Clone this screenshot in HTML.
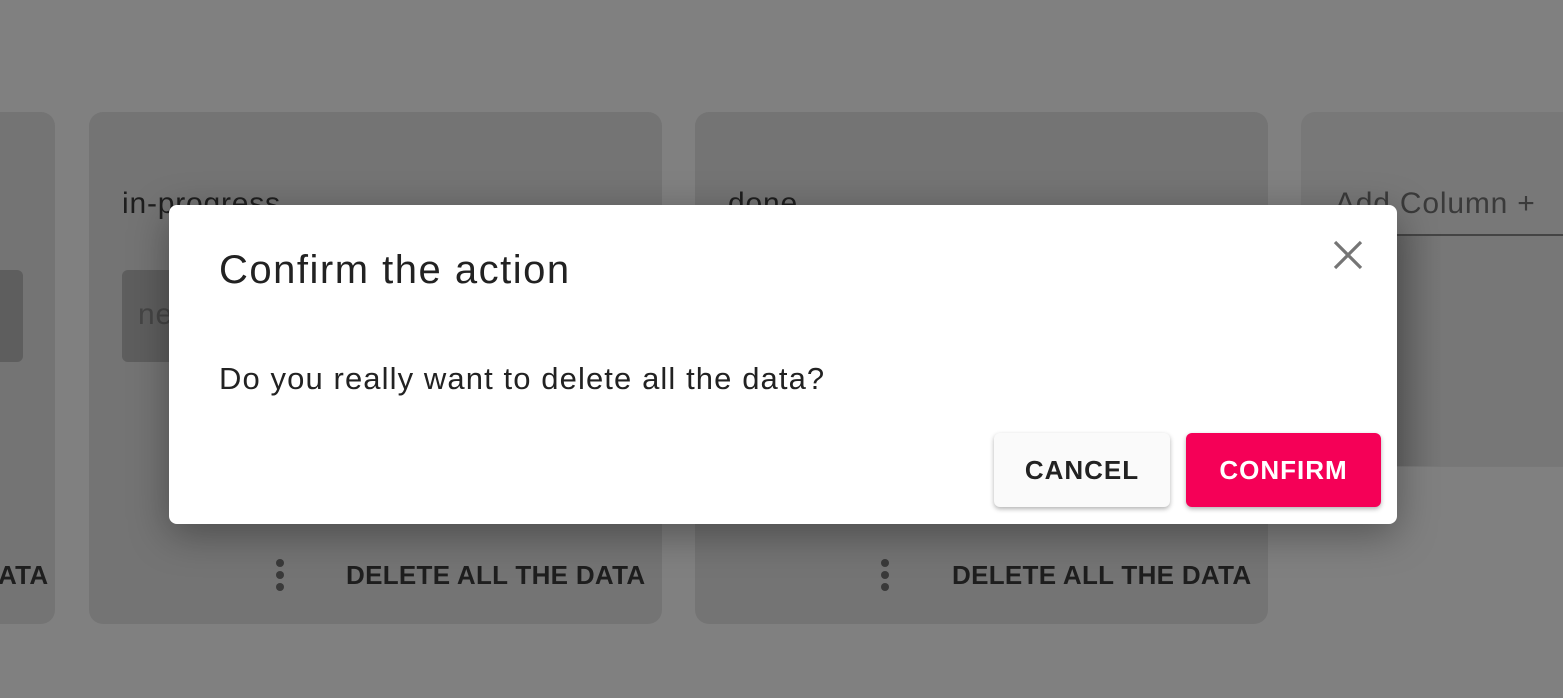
<!DOCTYPE html>
<html><head><style>
*{margin:0;padding:0;box-sizing:border-box}
body{width:1563px;height:698px;background:#808080;font-family:"Liberation Sans",sans-serif;position:relative;overflow:hidden}
.col{position:absolute;top:112px;height:512px;background:#747474;border-radius:14px}
.t{position:absolute;font-size:30px;color:#1e1e1e;letter-spacing:0.8px}
.del{position:absolute;top:560px;font-size:26px;font-weight:bold;color:#1e1e1e;letter-spacing:0.3px}
.dots{position:absolute;top:559px;width:8px}
.dots i{display:block;width:8px;height:8px;border-radius:50%;background:#3a3a3a;margin-bottom:4px}
.card{position:absolute;background:#5e5e5e;border-radius:6px}
.modal{position:absolute;left:169px;top:205px;width:1228px;height:319px;background:#fff;border-radius:8px;box-shadow:0 10px 40px rgba(0,0,0,.35)}
.btn{position:absolute;top:228px;height:74px;border-radius:6px;font-size:26px;text-align:center;line-height:74px;letter-spacing:1px;font-weight:bold}
</style></head><body>
<div class="col" style="left:-20px;width:75px"></div>
<div class="card" style="left:-10px;top:270px;width:33px;height:92px"></div>
<div class="del" style="left:-2px">ATA</div>

<div class="col" style="left:89px;width:573px"></div>
<div class="t" style="left:122px;top:187px">in-progress</div>
<div class="card" style="left:122px;top:270px;width:120px;height:92px"></div>
<div class="t" style="left:138px;top:298px;color:#454545">ne</div>
<div class="dots" style="left:276px"><i></i><i></i><i></i></div>
<div class="del" style="left:346px">DELETE ALL THE DATA</div>

<div class="col" style="left:695px;width:573px"></div>
<div class="t" style="left:728px;top:187px">done</div>
<div class="dots" style="left:881px"><i></i><i></i><i></i></div>
<div class="del" style="left:952px">DELETE ALL THE DATA</div>

<div class="col" style="left:1301px;width:300px;height:355px;background:#787878"></div>
<div class="t" style="left:1335px;top:187px;color:#3a3a3a">Add Column +</div>
<div style="position:absolute;left:1335px;top:234px;width:228px;height:2px;background:#444"></div>
<div style="position:absolute;left:1390px;top:236px;width:173px;height:230px;background:linear-gradient(90deg,#666,#777 30%,#777)"></div>

<div class="modal">
<div style="position:absolute;left:50px;top:43px;font-size:40px;color:#222;letter-spacing:1.5px">Confirm the action</div>
<svg style="position:absolute;left:1163px;top:34px" width="32" height="32" viewBox="0 0 32 32"><path d="M3 3L29 29M29 3L3 29" stroke="#757575" stroke-width="3.2"/></svg>
<div style="position:absolute;left:50px;top:156px;font-size:31px;color:#222;letter-spacing:1.1px">Do you really want to delete all the data?</div>
<div class="btn" style="left:825px;width:176px;background:#fafafa;color:#222;box-shadow:0 2px 5px rgba(0,0,0,.3)">CANCEL</div>
<div class="btn" style="left:1017px;width:195px;background:#f50057;color:#fff;box-shadow:0 2px 5px rgba(0,0,0,.3)">CONFIRM</div>
</div>
</body></html>
